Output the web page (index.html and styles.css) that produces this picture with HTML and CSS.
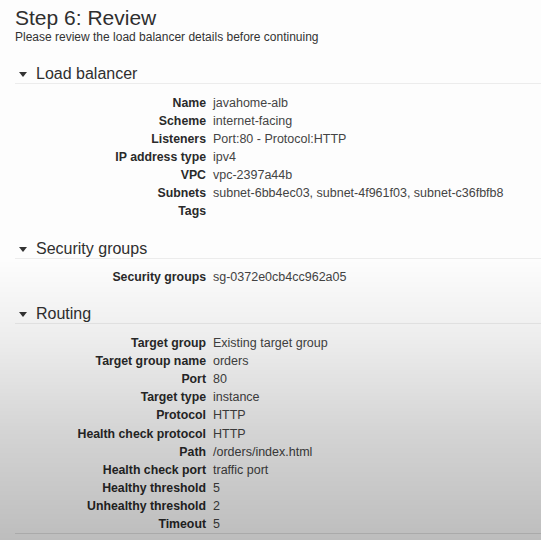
FILE: index.html
```html
<!DOCTYPE html>
<html lang="en">
<head>
<meta charset="utf-8">
<title>Step 6: Review</title>
<link rel="stylesheet" href="styles.css">
</head>
<body>
<div class="page">
  <h1 class="title">Step 6: Review</h1>
  <p class="subtitle">Please review the load balancer details before continuing</p>

  <section class="section">
    <h2 class="section-head"><span class="caret"></span>Load balancer</h2>
    <dl class="rows">
      <dt>Name</dt><dd>javahome-alb</dd>
      <dt>Scheme</dt><dd>internet-facing</dd>
      <dt>Listeners</dt><dd>Port:80 - Protocol:HTTP</dd>
      <dt>IP address type</dt><dd>ipv4</dd>
      <dt>VPC</dt><dd>vpc-2397a44b</dd>
      <dt>Subnets</dt><dd>subnet-6bb4ec03, subnet-4f961f03, subnet-c36fbfb8</dd>
      <dt>Tags</dt><dd></dd>
    </dl>
  </section>

  <section class="section">
    <h2 class="section-head"><span class="caret"></span>Security groups</h2>
    <dl class="rows">
      <dt>Security groups</dt><dd>sg-0372e0cb4cc962a05</dd>
    </dl>
  </section>

  <section class="section">
    <h2 class="section-head"><span class="caret"></span>Routing</h2>
    <dl class="rows rows-last">
      <dt>Target group</dt><dd>Existing target group</dd>
      <dt>Target group name</dt><dd>orders</dd>
      <dt>Port</dt><dd>80</dd>
      <dt>Target type</dt><dd>instance</dd>
      <dt>Protocol</dt><dd>HTTP</dd>
      <dt>Health check protocol</dt><dd>HTTP</dd>
      <dt>Path</dt><dd>/orders/index.html</dd>
      <dt>Health check port</dt><dd>traffic port</dd>
      <dt>Healthy threshold</dt><dd>5</dd>
      <dt>Unhealthy threshold</dt><dd>2</dd>
      <dt>Timeout</dt><dd>5</dd>
    </dl>
  </section>
</div>
<div class="shade"></div>
</body>
</html>
```

FILE: styles.css
```css
html, body {
  margin: 0;
  padding: 0;
  background: #fdfdfd;
}

body {
  font-family: "Liberation Sans", Arial, sans-serif;
  color: #333;
  height: 540px;
  overflow: hidden;
}

.page {
  padding: 6px 0 0 15px;
}

.title {
  margin: 0;
  font-size: 21px;
  line-height: 24px;
  font-weight: normal;
  color: #2f2f2f;
}

.subtitle {
  margin: 0;
  font-size: 12px;
  line-height: 14px;
  color: #333;
}

.section-head {
  margin: 0;
  font-size: 16px;
  line-height: 18px;
  font-weight: normal;
  color: #2f2f2f;
  border-bottom: 1px solid #ececec;
  display: flex;
  align-items: center;
}

.section:first-of-type .section-head {
  margin-top: 21px;
}

.section + .section {
  margin-top: 19px;
}

.caret {
  width: 0;
  height: 0;
  border-left: 4px solid transparent;
  border-right: 4px solid transparent;
  border-top: 5px solid #333;
  margin: 1px 9px 0 4px;
}

.rows {
  margin: 0;
  padding-top: 9.5px;
  display: grid;
  grid-template-columns: 191px 1fr;
  column-gap: 7px;
  font-size: 12.5px;
  line-height: 18.15px;
}

.rows dt {
  text-align: right;
  font-weight: bold;
  font-size: 12.3px;
  color: #2a2a2a;
}

.rows dd {
  margin: 0;
  color: #444;
  min-height: 18.15px;
}

.rows-last {
  border-bottom: 1px solid #e2e2e2;
}

.shade {
  position: fixed;
  inset: 0;
  pointer-events: none;
  background: linear-gradient(
    to bottom,
    rgba(0, 0, 0, 0) 0%,
    rgba(0, 0, 0, 0) 48%,
    rgba(0, 0, 0, 0.06) 62%,
    rgba(0, 0, 0, 0.16) 80%,
    rgba(0, 0, 0, 0.25) 100%
  );
}
```
